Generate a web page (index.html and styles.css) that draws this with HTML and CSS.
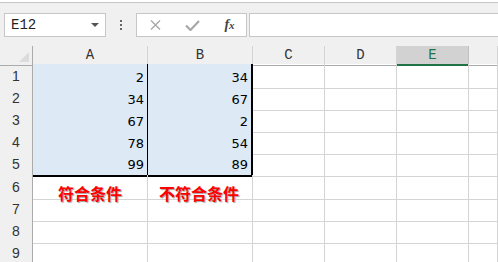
FILE: index.html
```html
<!DOCTYPE html>
<html lang="zh-CN">
<head>
    <meta charset="UTF-8">
    <title>Sheet</title>
    <link rel="stylesheet" href="styles.css">
</head>
<body>

    <!-- Formula bar -->
    <div class="toolbar">
        <div class="name-box">
            <span>E12</span>
            <span class="caret"></span>
        </div>
        <div class="dots"><i></i><i></i><i></i></div>
        <div class="fx-buttons">
            <span class="btn">
                <svg width="11" height="10" viewBox="0 0 11 10"><path d="M1 0.5 L10 9.5 M10 0.5 L1 9.5" stroke="#a8a8a8" stroke-width="1.4" fill="none"/></svg>
            </span>
            <span class="btn">
                <svg width="15" height="11" viewBox="0 0 15 11"><path d="M1 5.5 L5.5 10 L14 1" stroke="#a8a8a8" stroke-width="2.2" fill="none"/></svg>
            </span>
            <span class="btn fx"><i>f</i><i class="x">x</i></span>
        </div>
        <div class="formula-input"></div>
    </div>

    <!-- Grid -->
    <div class="sheet">
        <div class="row head">
            <div class="corner"><span></span></div>
            <div class="col">A</div>
            <div class="col">B</div>
            <div class="col">C</div>
            <div class="col">D</div>
            <div class="col active">E</div>
            <div class="col"></div>
        </div>
        <div class="row">
            <div class="num">1</div>
            <div class="cell data">2</div>
            <div class="cell data last">34</div>
            <div class="cell"></div><div class="cell"></div><div class="cell"></div><div class="cell"></div>
        </div>
        <div class="row">
            <div class="num">2</div>
            <div class="cell data">34</div>
            <div class="cell data last">67</div>
            <div class="cell"></div><div class="cell"></div><div class="cell"></div><div class="cell"></div>
        </div>
        <div class="row">
            <div class="num">3</div>
            <div class="cell data">67</div>
            <div class="cell data last">2</div>
            <div class="cell"></div><div class="cell"></div><div class="cell"></div><div class="cell"></div>
        </div>
        <div class="row">
            <div class="num">4</div>
            <div class="cell data">78</div>
            <div class="cell data last">54</div>
            <div class="cell"></div><div class="cell"></div><div class="cell"></div><div class="cell"></div>
        </div>
        <div class="row tall">
            <div class="num">5</div>
            <div class="cell data bottom">99</div>
            <div class="cell data last bottom">89</div>
            <div class="cell"></div><div class="cell"></div><div class="cell"></div><div class="cell"></div>
        </div>
        <div class="row">
            <div class="num">6</div>
            <div class="cell"></div><div class="cell"></div>
            <div class="cell"></div><div class="cell"></div><div class="cell"></div><div class="cell"></div>
        </div>
        <div class="row">
            <div class="num">7</div>
            <div class="cell"></div><div class="cell"></div>
            <div class="cell"></div><div class="cell"></div><div class="cell"></div><div class="cell"></div>
        </div>
        <div class="row">
            <div class="num">8</div>
            <div class="cell"></div><div class="cell"></div>
            <div class="cell"></div><div class="cell"></div><div class="cell"></div><div class="cell"></div>
        </div>
        <div class="row">
            <div class="num">9</div>
            <div class="cell"></div><div class="cell"></div>
            <div class="cell"></div><div class="cell"></div><div class="cell"></div><div class="cell"></div>
        </div>

        <!-- Floating labels -->
        <div class="label label-yes">符合条件</div>
        <div class="label label-no">不符合条件</div>
    </div>

</body>
</html>
```

FILE: styles.css
```css
body {
    margin: 0;
    background-color: #fff;
    width: 498px;
    height: 262px;
    overflow: hidden;
    font-family: "Liberation Sans", Arial, sans-serif;
}

/* Formula bar */
.toolbar {
    margin-top: 2px;
    height: 44px;
    box-sizing: border-box;
    border-top: 1px solid #c6c6c6;
    background-color: #f0f0f0;
    display: flex;
    align-items: flex-start;
    padding-top: 10px;
}

.name-box {
    margin-left: 4px;
    width: 102px;
    height: 24px;
    box-sizing: border-box;
    border: 1px solid #c6c6c6;
    background-color: #fff;
    display: flex;
    align-items: center;
    justify-content: space-between;
    padding: 0 6px 0 6px;
    font-family: "Liberation Mono", monospace;
    font-size: 14px;
    color: #222;
}

.caret {
    width: 0;
    height: 0;
    border-left: 4px solid transparent;
    border-right: 4px solid transparent;
    border-top: 4px solid #555;
}

.dots {
    width: 30px;
    height: 24px;
    display: flex;
    flex-direction: column;
    align-items: center;
    justify-content: center;
    gap: 2px;
}

.dots i {
    width: 2px;
    height: 2px;
    background-color: #666;
}

.fx-buttons {
    width: 111px;
    height: 24px;
    box-sizing: border-box;
    border: 1px solid #c6c6c6;
    background-color: #fff;
    display: grid;
    grid-template-columns: 37px 37px 37px;
    align-items: center;
    justify-items: center;
}

.btn svg {
    display: block;
}

.fx {
    font-family: "Liberation Serif", serif;
    font-size: 14px;
    color: #444;
    font-weight: bold;
}

.fx .x {
    font-size: 11px;
}

.formula-input {
    margin-left: 2px;
    flex: 1;
    height: 24px;
    box-sizing: border-box;
    border: 1px solid #c6c6c6;
    border-right: none;
    background-color: #fff;
}

/* Grid */
.sheet {
    position: relative;
}

.row {
    display: grid;
    grid-template-columns: 33px 115px 105px 72px 72px 72px 1fr;
    height: 22px;
}

.row.head {
    height: 18px;
    background-color: #f0f0f0;
}

.row.tall {
    height: 23px;
}

.row > div {
    box-sizing: border-box;
}

.corner {
    border-right: 1px solid #ababab;
    border-bottom: 1px solid #ababab;
    position: relative;
}

.corner span {
    position: absolute;
    right: 3px;
    bottom: 3px;
    width: 0;
    height: 0;
    border-left: 10px solid transparent;
    border-bottom: 10px solid #dcdcdc;
}

.col {
    border-right: 1px solid #d4d4d4;
    border-bottom: 1px solid #ababab;
    text-align: center;
    font-family: "Liberation Mono", monospace;
    font-size: 14px;
    line-height: 18px;
    color: #333;
}

.col.active {
    background-color: #d2d2d2;
    color: #217346;
    border-bottom: 2px solid #217346;
    border-right-color: #c0c0c0;
}

.num {
    background-color: #f0f0f0;
    border-right: 1px solid #ababab;
    border-bottom: 1px solid #d4d4d4;
    text-align: center;
    font-size: 14px;
    line-height: 24px;
    color: #333;
}

.cell {
    border-right: 1px solid #d4d4d4;
    border-bottom: 1px solid #d4d4d4;
}

.cell.data {
    background-color: #dde9f5;
    border-right-color: #000;
    border-bottom-color: #000;
    display: flex;
    align-items: flex-end;
    justify-content: flex-end;
    padding: 0 3px 3px 0;
    font-family: "DejaVu Sans", sans-serif;
    font-size: 13px;
    line-height: 15px;
    color: #000;
}

.cell.last {
    border-right-width: 2px;
}

.cell.bottom {
    border-bottom-width: 2px;
}

/* Floating labels */
.label {
    position: absolute;
    font-family: "Noto Sans CJK SC", sans-serif;
    font-weight: bold;
    font-size: 16px;
    line-height: 16px;
    color: #f00;
    text-shadow: 1px 1px 1px #a0a0a0;
}

.label-yes {
    left: 58px;
    top: 139px;
}

.label-no {
    left: 159px;
    top: 139px;
}
```
